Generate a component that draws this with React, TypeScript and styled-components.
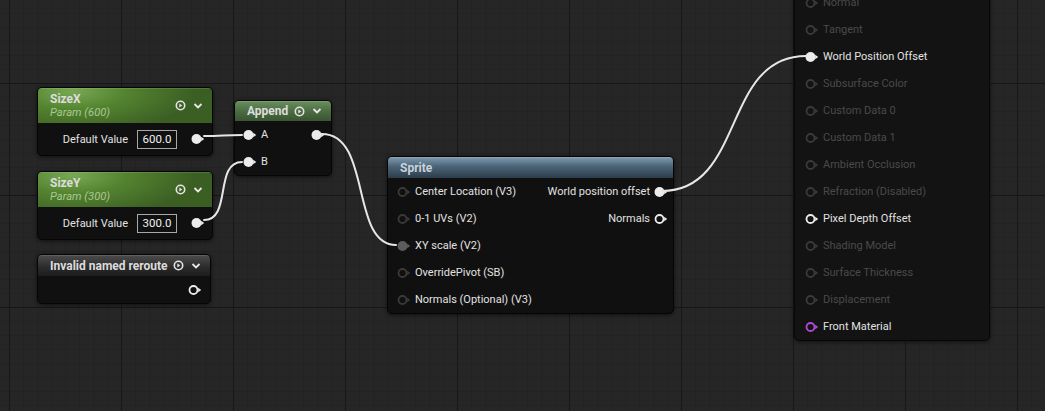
import React from 'react'
import styled, { createGlobalStyle } from 'styled-components'

const GlobalStyle = createGlobalStyle`
  body {
    margin: 0;
    background: #262626;
    font-family: Roboto, 'Noto Sans', Arial, sans-serif;
    overflow: hidden;
  }
`

const Canvas = styled.div`
  position: relative;
  width: 1045px;
  height: 411px;
  overflow: hidden;
  background-color: #262626;
  background-image:
    linear-gradient(to right, #171717 1px, transparent 1px),
    linear-gradient(to bottom, #171717 1px, transparent 1px),
    linear-gradient(to right, #232323 1px, transparent 1px),
    linear-gradient(to bottom, #232323 1px, transparent 1px);
  background-size: 112px 112px, 112px 112px, 14px 14px, 14px 14px;
  background-position: 9px 83px, 9px 83px, 9px 83px, 9px 83px;
`

const Wires = styled.svg`
  position: absolute;
  left: 0;
  top: 0;
  pointer-events: none;
`

type HeaderKind = 'param' | 'append' | 'sprite' | 'reroute'

const headerBg: Record<HeaderKind, string> = {
  param: 'radial-gradient(ellipse 70% 120% at 20% 10%, #78a852 0%, #53822f 45%, #3b5f23 100%)',
  append: 'linear-gradient(180deg, #6a8f5e 0%, #4a6a40 55%, #3a5532 100%)',
  sprite: 'linear-gradient(180deg, #809bb0 0%, #4b6478 45%, #2c3d4a 100%)',
  reroute: 'linear-gradient(180deg, #4c4c4c 0%, #2a2a2a 60%, #1d1d1d 100%)',
}

const Node = styled.div<{ $x: number; $y: number; $w: number }>`
  position: absolute;
  left: ${(p) => p.$x}px;
  top: ${(p) => p.$y}px;
  width: ${(p) => p.$w}px;
  display: flex;
  flex-direction: column;
  background: #101010;
  border: 1px solid #050505;
  border-radius: 5px;
  box-shadow: 0 1px 4px rgba(0, 0, 0, 0.6);
  overflow: hidden;
  color: #e4e4e4;
  font-size: 11px;
`

const Header = styled.div<{ $kind: HeaderKind; $h: number }>`
  height: ${(p) => p.$h}px;
  background: ${(p) => headerBg[p.$kind]};
  display: flex;
  align-items: center;
  padding: 0 9px 0 12px;
  gap: 6px;
  box-shadow: inset 0 1px 0 rgba(255, 255, 255, 0.12);
`

const HeaderTitles = styled.div`
  flex: 1;
  display: flex;
  flex-direction: column;
  justify-content: center;
  min-width: 0;
`

const Title = styled.div<{ $dim?: boolean }>`
  font-weight: 700;
  font-size: 12px;
  color: ${(p) => (p.$dim ? '#c9d2d9' : '#dcdcdc')};
  line-height: 14px;
  white-space: nowrap;
`

const Subtitle = styled.div`
  font-style: italic;
  font-size: 11.2px;
  color: #a9c894;
  line-height: 14px;
`

const HeaderIcons = styled.div`
  display: flex;
  align-items: center;
  gap: 7px;
`

const Body = styled.div`
  display: flex;
  flex-direction: column;
`

const Row = styled.div<{ $h?: number; $justify?: string; $padL?: number; $padR?: number }>`
  height: ${(p) => p.$h ?? 27}px;
  display: flex;
  align-items: center;
  justify-content: ${(p) => p.$justify ?? 'flex-start'};
  padding: 0 ${(p) => p.$padR ?? 0}px 0 ${(p) => p.$padL ?? 0}px;
  gap: 4px;
  white-space: nowrap;
`

const Label = styled.span<{ $muted?: boolean }>`
  color: ${(p) => (p.$muted ? '#4a4a4a' : '#e2e2e2')};
  font-size: 11px;
`

const ValueBox = styled.div`
  width: 38px;
  height: 17px;
  border: 1px solid #a8a8a8;
  color: #f0f0f0;
  font-size: 11.5px;
  display: flex;
  align-items: center;
  justify-content: center;
  margin-left: 5px;
  margin-right: 10px;
`

const Columns = styled.div`
  display: flex;
  justify-content: space-between;
`

const Column = styled.div<{ $align?: string }>`
  display: flex;
  flex-direction: column;
  align-items: ${(p) => p.$align ?? 'flex-start'};
`

const Panel = styled.div`
  position: absolute;
  left: 794px;
  top: -40px;
  width: 196px;
  height: 381px;
  background: #131313;
  border: 1px solid #070707;
  border-radius: 5px;
  box-shadow: 0 1px 5px rgba(0, 0, 0, 0.6);
  padding-top: 1px;
  box-sizing: border-box;
  display: flex;
  flex-direction: column;
`

type PinTone = 'white' | 'dim' | 'gray' | 'purple'
const pinColors: Record<PinTone, string> = {
  white: '#ececec',
  dim: '#3a3a3a',
  gray: '#5c5c5c',
  purple: '#b149d8',
}

function Pin({ tone = 'white', filled = false }: { tone?: PinTone; filled?: boolean }) {
  const c = pinColors[tone]
  return (
    <svg width="14" height="12" viewBox="0 0 14 12" style={{ flex: 'none' }}>
      {filled ? (
        <circle cx="5.5" cy="6" r="5" fill={c} />
      ) : (
        <circle cx="5.5" cy="6" r="4" fill="none" stroke={c} strokeWidth="1.8" />
      )}
      <polygon points="10.2,3.7 13.2,6 10.2,8.3" fill={c} />
    </svg>
  )
}

function PlayIcon() {
  return (
    <svg width="11" height="11" viewBox="0 0 11 11">
      <circle cx="5.5" cy="5.5" r="4.2" fill="none" stroke="#e2e2e2" strokeWidth="1.6" />
      <polygon points="4.3,3.6 7.3,5.5 4.3,7.4" fill="#e2e2e2" />
    </svg>
  )
}

function Chevron() {
  return (
    <svg width="10" height="8" viewBox="0 0 10 8">
      <polyline points="1.5,2 5,5.5 8.5,2" fill="none" stroke="#e6e6e6" strokeWidth="1.8" />
    </svg>
  )
}

function ParamNode({ x, y, name, param, value }: { x: number; y: number; name: string; param: string; value: string }) {
  return (
    <Node $x={x} $y={y} $w={174}>
      <Header $kind="param" $h={35}>
        <HeaderTitles>
          <Title>{name}</Title>
          <Subtitle>{param}</Subtitle>
        </HeaderTitles>
        <HeaderIcons>
          <PlayIcon />
          <Chevron />
        </HeaderIcons>
      </Header>
      <Body>
        <Row $h={32} $justify="flex-end" $padR={7}>
          <Label>Default Value</Label>
          <ValueBox>{value}</ValueBox>
          <Pin filled />
        </Row>
      </Body>
    </Node>
  )
}

const spriteInputs = [
  { label: 'Center Location (V3)', tone: 'dim' as PinTone, filled: false },
  { label: '0-1 UVs (V2)', tone: 'dim' as PinTone, filled: false },
  { label: 'XY scale (V2)', tone: 'gray' as PinTone, filled: true },
  { label: 'OverridePivot (SB)', tone: 'dim' as PinTone, filled: false },
  { label: 'Normals (Optional) (V3)', tone: 'dim' as PinTone, filled: false },
]

const materialInputs: { label: string; active?: boolean; filled?: boolean; tone?: PinTone }[] = [
  { label: 'Opacity Mask' },
  { label: 'Normal' },
  { label: 'Tangent' },
  { label: 'World Position Offset', active: true, filled: true },
  { label: 'Subsurface Color' },
  { label: 'Custom Data 0' },
  { label: 'Custom Data 1' },
  { label: 'Ambient Occlusion' },
  { label: 'Refraction (Disabled)' },
  { label: 'Pixel Depth Offset', active: true },
  { label: 'Shading Model' },
  { label: 'Surface Thickness' },
  { label: 'Displacement' },
  { label: 'Front Material', active: true, tone: 'purple' },
]

export default function App() {
  return (
    <>
      <GlobalStyle />
      <Canvas>
        <ParamNode x={37} y={87} name="SizeX" param="Param (600)" value="600.0" />
        <ParamNode x={37} y={171} name="SizeY" param="Param (300)" value="300.0" />

        <Node $x={37} $y={254} $w={172}>
          <Header $kind="reroute" $h={21}>
            <HeaderTitles>
              <Title>Invalid named reroute</Title>
            </HeaderTitles>
            <HeaderIcons>
              <PlayIcon />
              <Chevron />
            </HeaderIcons>
          </Header>
          <Body>
            <Row $h={27} $justify="flex-end" $padR={8}>
              <Pin />
            </Row>
          </Body>
        </Node>

        <Node $x={234} $y={100} $w={96}>
          <Header $kind="append" $h={20}>
            <HeaderTitles>
              <Title>Append</Title>
            </HeaderTitles>
            <HeaderIcons>
              <PlayIcon />
              <Chevron />
            </HeaderIcons>
          </Header>
          <Columns>
            <Column>
              <Row $padL={8}>
                <Pin filled />
                <Label>A</Label>
              </Row>
              <Row $padL={8}>
                <Pin filled />
                <Label>B</Label>
              </Row>
            </Column>
            <Column>
              <Row $padR={6} $h={27}>
                <Pin filled />
              </Row>
            </Column>
          </Columns>
        </Node>

        <Node $x={387} $y={156} $w={285}>
          <Header $kind="sprite" $h={21}>
            <HeaderTitles>
              <Title $dim>Sprite</Title>
            </HeaderTitles>
          </Header>
          <Columns>
            <Column>
              {spriteInputs.map((p) => (
                <Row key={p.label} $padL={9}>
                  <Pin tone={p.tone} filled={p.filled} />
                  <Label>{p.label}</Label>
                </Row>
              ))}
            </Column>
            <Column $align="flex-end">
              <Row $padR={5}>
                <Label>World position offset</Label>
                <Pin filled />
              </Row>
              <Row $padR={5}>
                <Label>Normals</Label>
                <Pin />
              </Row>
            </Column>
          </Columns>
        </Node>

        <Panel>
          {materialInputs.map((p) => (
            <Row key={p.label} $padL={10}>
              <Pin tone={p.tone ?? (p.active ? 'white' : 'dim')} filled={p.filled} />
              <Label $muted={!p.active}>{p.label}</Label>
            </Row>
          ))}
        </Panel>

        <Wires width="1045" height="411">
          <g fill="none" stroke="#e6e6e6" strokeWidth="2" strokeLinecap="round">
            <path d="M204,136 C222,136 224,135 242,135" />
            <path d="M204,220 C232,220 214,162 242,162" />
            <path d="M322,134 C372,134 350,245 396,245" />
            <path d="M662,191 C745,191 722,56 806,56" />
          </g>
        </Wires>
      </Canvas>
    </>
  )
}
